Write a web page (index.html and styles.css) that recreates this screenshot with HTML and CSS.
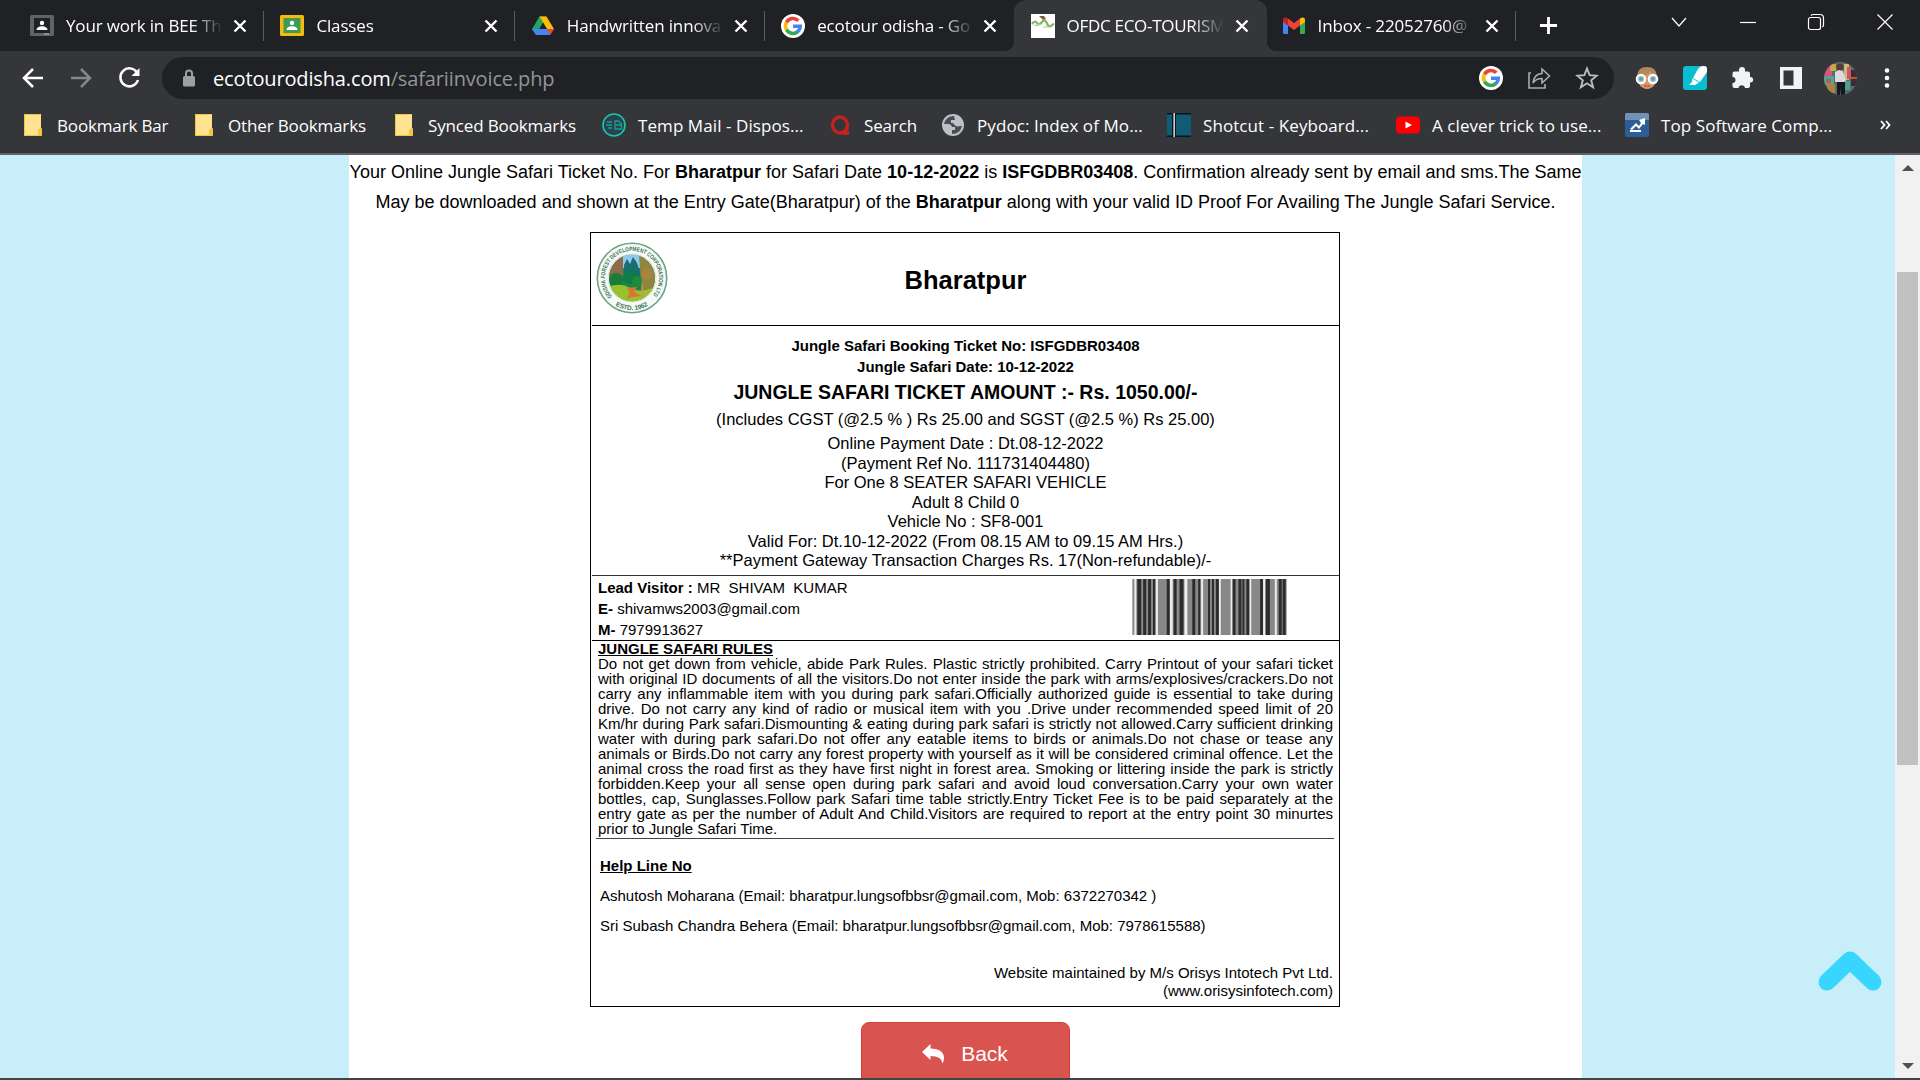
FILE: index.html
```html
<!DOCTYPE html>
<html lang="en">
<head>
<meta charset="utf-8">
<title>OFDC ECO-TOURISM</title>
<link rel="stylesheet" href="styles.css">
</head>
<body>
<svg width="0" height="0" class="defs">
  <symbol id="x" viewBox="0 0 14 14"><path d="M1.500 1.500l11 11M12.500 1.500l-11 11" stroke="#fff" stroke-width="2.400" fill="none"/></symbol>
  <symbol id="google" viewBox="0 0 24 24"><circle cx="12" cy="12" r="12" fill="#fff"/><g fill="none" stroke-width="3.600"><path d="M5.500 8.300A7.400 7.400 0 0 1 17.300 6.800" stroke="#ea4335"/><path d="M5.500 15.700A7.400 7.400 0 0 1 5.500 8.300" stroke="#fbbc05"/><path d="M17 17.400A7.400 7.400 0 0 1 5.500 15.700" stroke="#34a853"/><path d="M12 12.200H19.200A7.400 7.400 0 0 1 16.500 17.700" stroke="#4285f4"/></g></symbol>
  <symbol id="folder" viewBox="0 0 18 22"><path d="M0 0h17v14l1 1v6l-1 1H0z" fill="#ffe08a"/><path d="M0 21h14v-5l1-1.500h3V21l-1 1H0z" fill="#f5c542"/><path d="M0 0h16v1H1v20H0z" fill="#eec54b"/><path d="M1 1h15v13l-2 1.500V20H1z" fill="#ffe391"/></symbol>
</svg>
<div class="screen">
  <header class="tabs">
    <div class="tab"><svg class="fav" viewBox="0 0 24 24"><rect y="1" width="24" height="21" rx="1.500" fill="#5f6368"/><rect x="4" y="4" width="16" height="15" fill="#202124"/><circle cx="12" cy="9" r="2.200" fill="#fff"/><path d="M6.500 16c0-5 11-5 11 0z" fill="#fff"/><path d="M14 19h5v2h-5z" fill="#8b8f94"/></svg><span class="title">Your work in BEE Th</span><svg class="x"><use href="#x"/></svg></div>
    <div class="tab"><svg class="fav" viewBox="0 0 24 24"><rect y="1" width="24" height="21" rx="1.500" fill="#f6b90e"/><rect x="3.500" y="4" width="17" height="15" fill="#3f9a56"/><circle cx="12" cy="9" r="2.200" fill="#fff"/><path d="M6.500 16c0-5 11-5 11 0z" fill="#fff"/></svg><span class="title">Classes</span><svg class="x"><use href="#x"/></svg></div>
    <div class="tab"><svg class="fav" viewBox="0 0 24 24"><path d="M8.500 2.500h7L12 9 5 20.500 1 15z" fill="#1fa463"/><path d="M8.500 2.500h7L23 15h-7z" fill="#fbbc04"/><path d="M7.500 15H23l-4 6H5l-4-6z" fill="#4285f4"/><path d="M16 15h7l-4 6z" fill="#ea4335"/><path d="M12 9l3.500 6h-7z" fill="#202124"/></svg><span class="title">Handwritten innova</span><svg class="x"><use href="#x"/></svg></div>
    <div class="tab last"><svg class="fav"><use href="#google"/></svg><span class="title">ecotour odisha - Go</span><svg class="x"><use href="#x"/></svg></div>
    <div class="tab active"><svg class="fav" viewBox="0 0 24 24"><path d="M0 0h24v24H0z" fill="#fff"/><path d="M8 2h5l2 3-3 1z" fill="#7a5c45"/><path d="M1 10q3-4 5-1t5-1 5 1.500 7 0" fill="none" stroke="#86b75a" stroke-width="2.200"/><path d="M3 11q4 1 6-1M12 13h8" fill="none" stroke="#b7cba6" stroke-width="1.200"/></svg><span class="title">OFDC ECO-TOURISM</span><svg class="x"><use href="#x"/></svg></div>
    <div class="tab"><svg class="fav" viewBox="0 0 24 24"><path d="M1 6v12.500a1.500 1.500 0 0 0 1.500 1.500H6V11z" fill="#4285f4"/><path d="M23 6v12.500a1.500 1.500 0 0 1-1.500 1.500H18V11z" fill="#34a853"/><path d="M1 7V6c0-3 3-3 5-1.500v7L1 8z" fill="#c5221f"/><path d="M6 4.500l6 4.500 6-4.500v7L12 16l-6-4.500z" fill="#ea4335"/><path d="M18 4.500c2-1.500 5-1.500 5 1.500v2l-5 3.500z" fill="#fbbc04"/></svg><span class="title">Inbox - 22052760@</span><svg class="x"><use href="#x"/></svg></div>
    <svg class="plus" viewBox="0 0 20 20"><path d="M10 1v18M1 10h18" stroke="#fff" stroke-width="3"/></svg>
    <div class="win">
      <svg viewBox="0 0 18 18"><path d="M2 5l7 8 7-8"/></svg>
      <svg viewBox="0 0 18 18"><path d="M1 9.500h16"/></svg>
      <svg viewBox="0 0 18 18"><rect x="1.500" y="4.500" width="12" height="12" rx="2"/><path d="M4 2.500q1-1 2-1h7q3.500 0 3.500 3.500v7q0 1-1 2"/></svg>
      <svg viewBox="0 0 18 18"><path d="M1.500 1.500l15 15M16.500 1.500l-15 15"/></svg>
    </div>
  </header>
  <div class="toolbar">
    <svg class="nav" viewBox="0 0 24 24"><path d="M22 12H4M12 3l-9 9 9 9" stroke="#fff"/></svg>
    <svg class="nav" viewBox="0 0 24 24"><path d="M2 12h18M12 3l9 9-9 9" stroke="#85878a"/></svg>
    <svg class="nav" viewBox="0 0 24 24"><path d="M20 6.500A9 9 0 1 0 21 14" stroke="#fff"/><path d="M22.500 2v8h-8z" fill="#fff"/></svg>
    <div class="omnibox">
      <svg class="lock" viewBox="0 0 14 18"><rect x="1" y="7" width="12" height="10.500" rx="1.500" fill="#9aa0a6"/><path d="M4 8V4.500a3 3 0 0 1 6 0V8" fill="none" stroke="#9aa0a6" stroke-width="2"/></svg>
      <span class="url">ecotourodisha.com<i>/safariinvoice.php</i></span>
      <svg class="i24"><use href="#google"/></svg>
      <svg class="i24" viewBox="0 0 24 24"><path d="M4 7H2v15h16v-4M6 17q1-9 9-9.500V3l7.500 7-7.500 7v-4.500q-6 0-9 4.500z" fill="none" stroke="#a9acb0" stroke-width="1.600"/></svg>
      <svg class="i24" viewBox="0 0 24 24"><path d="M12 2.500l2.600 6.700 7.200.5-5.600 4.600 1.900 7-6.100-4-6.100 4 1.900-7L2.200 9.700l7.200-.5z" fill="none" stroke="#b9bcc0" stroke-width="1.900"/></svg>
    </div>
    <svg class="i24" viewBox="0 0 24 24"><path d="M2 12C2 4 6 1 12 1s10 3 10 11l-3 8q-7 6-14 0z" fill="#b08a58"/><path d="M5 10q9-1 10-5l4 6v8q-7 8-14 0z" fill="#d99467"/><g fill="#aacdd8" stroke="#fff" stroke-width="2"><circle cx="6" cy="13" r="4.300"/><circle cx="18" cy="13" r="4.300"/></g><circle cx="6" cy="13" r="2" fill="#6f97a5"/><circle cx="18" cy="13" r="2" fill="#6f97a5"/><path d="M9 20h6" stroke="#a54a43"/></svg>
    <svg class="i24" viewBox="0 0 24 24"><rect width="24" height="24" rx="3" fill="#08bfd1"/><path d="M15 3q2-3 5-3h1q3 0 3 3v3l-7 10-7-4z" fill="#fff"/><path d="M9.500 12.500l6.500 4-4 2.500H6l3-3z" fill="#fff"/></svg>
    <svg class="i24" viewBox="0 0 24 24"><path d="M1.500 7.500q0-2 2-2H8V4a3 3 0 0 1 6 0v1.500h3q2 0 2 2V11h1a2.800 2.800 0 0 1 0 5.500h-1V20q0 2-2 2h-3a3.300 3.300 0 0 0-6.500 0H3.500q-2 0-2-2v-3a3 3 0 0 0 0-6z" fill="#f1f3f4"/></svg>
    <svg class="i24" viewBox="0 0 24 24"><path d="M1 1h22v22H1z" fill="#f1f3f4"/><path d="M4.500 4.500h10v15h-10z" fill="#35363a"/></svg>
    <svg class="avatar" viewBox="0 0 33 33"><defs><clipPath id="av"><circle cx="16.500" cy="16.500" r="16.500"/></clipPath></defs><g clip-path="url(#av)"><path d="M0 0h33v33H0z" fill="#536f69"/><path d="M0 4h8v10H0z" fill="#d5567c"/><path d="M6 2h6v7H6z" fill="#c9a44a"/><path d="M0 14h10v9H0z" fill="#4ba89b"/><path d="M2 17h5v4H2z" fill="#c9544a"/><path d="M20 2h5v16h-5z" fill="#d1b878"/><path d="M23 5h4v12h-4z" fill="#cc5569"/><path d="M27 8h6v16h-6z" fill="#3d2c34"/><path d="M27 15h6v2h-6z" fill="#c0552f"/><path d="M3 22h8v9H3z" fill="#a9833f"/><path d="M21 19h5v9h-5z" fill="#4f9f8f"/><circle cx="16" cy="5" r="3.500" fill="#583a35"/><path d="M11 10l4-2 4 1 3 10-2 1H11z" fill="#ded9df"/><path d="M13 20h8v13h-4l-1-7v7h-3z" fill="#171720"/></g></svg>
    <svg class="dots" viewBox="0 0 6 24"><circle cx="3" cy="4.500" r="2.300"/><circle cx="3" cy="12" r="2.300"/><circle cx="3" cy="19.500" r="2.300"/></svg>
  </div>
  <nav class="bookmarks">
    <a><svg class="fold"><use href="#folder"/></svg>Bookmark Bar</a>
    <a><svg class="fold"><use href="#folder"/></svg>Other Bookmarks</a>
    <a><svg class="fold"><use href="#folder"/></svg>Synced Bookmarks</a>
    <a class="wide"><svg class="i24" viewBox="0 0 24 24"><circle cx="12" cy="12" r="11" fill="#2b4054" stroke="#18c8a0" stroke-width="1.600"/><path d="M5 9h5M4 12h6M6 15h4M13 8h3.500l3 3v5H13zM13 12h6" fill="none" stroke="#189f8a" stroke-width="1.300"/></svg>Temp Mail - Dispos...</a>
    <a><svg class="i24" viewBox="0 0 24 24"><ellipse cx="12" cy="12" rx="7.500" ry="8" fill="none" stroke="#c5221f" stroke-width="3.500"/><path d="M13 18h8v4h-5z" fill="#c5221f"/></svg>Search</a>
    <a class="wide"><svg class="i24" viewBox="0 0 24 24"><circle cx="12" cy="12" r="11" fill="#bdc1c6"/><path d="M13 3q-8 0-10 8h4q3 0 4 3h3v3h-3v4q8 0 10-8h-3q-1 1-3 0t-3-3h-2V7h4z" fill="#4a4d51"/></svg>Pydoc: Index of Mo...</a>
    <a class="wide"><svg class="i24" viewBox="0 0 24 24"><path d="M0 0h24v24H0z" fill="#0b1418"/><path d="M0 1.500h5v21H0zM9 1.500h15v21H9z" fill="#125b75"/><path d="M6.500 0h1.300v24H6.500z" fill="#fff"/></svg>Shotcut - Keyboard...</a>
    <a class="wide"><svg class="i24" viewBox="0 0 24 24"><rect y="3.500" width="24" height="17" rx="4" fill="#f00"/><path d="M9.500 8.500l6.500 3.500-6.500 3.500z" fill="#fff"/></svg>A clever trick to use...</a>
    <a class="wide"><svg class="i24" viewBox="0 0 24 24"><rect width="24" height="24" rx="2" fill="#2d5d96"/><path d="M0 2q0-2 2-2h20q2 0 2 2v5H0z" fill="#7192b5"/><path d="M5 16l6-6 3 3 2-3-2-3 6-2v7l-2-1-4 5-3-3-4 4zM5 17h11v2H5z" fill="#fff"/></svg>Top Software Comp...</a>
    <svg class="more" viewBox="0 0 12 12"><path d="M1 2L4.500 6 1 10M6 2l3.500 4L6 10" fill="none" stroke="#fff" stroke-width="1.800"/></svg>
  </nav>
  <main class="page">
    <div class="content">
      <p class="intro">Your Online Jungle Safari Ticket No. For <b>Bharatpur</b> for Safari Date <b>10-12-2022</b> is <b>ISFGDBR03408</b>. Confirmation already sent by email and sms.The Same<br>May be downloaded and shown at the Entry Gate(Bharatpur) of the <b>Bharatpur</b> along with your valid ID Proof For Availing The Jungle Safari Service.</p>
      <section class="ticket">
        <div class="head">
          <svg class="seal" viewBox="0 0 72 72">
            <defs><path id="ring" d="M16.300 54.400A27 27 0 1 1 55.700 54.400"/><path id="ring2" d="M15.400 60.500A32 32 0 0 0 56.600 60.500"/><clipPath id="c"><ellipse cx="36" cy="36" rx="23" ry="23.500"/></clipPath></defs>
            <circle cx="36" cy="36" r="34.700" fill="#f6faf7" stroke="#6ba384" stroke-width="1.600"/>
            <g clip-path="url(#c)"><path d="M0 0h72v72H0z" fill="#238345"/><path d="M24 12h22v14H24z" fill="#8fc9ee"/><path d="M13 18l14-4v20H13z" fill="#8c6a4c"/><path d="M43 14l16 4v31H46z" fill="#91843c"/><path d="M28 23l3-6 3 5 3-7 4 6 3 9v6H28z" fill="#1a6e70"/><circle cx="20" cy="38" r="7" fill="#197c3c"/><circle cx="34" cy="35" r="7" fill="#0e7c46"/><circle cx="41" cy="39" r="5" fill="#1d8a3c"/><circle cx="51" cy="32" r="6" fill="#a58540"/><path d="M12 45q12-5 22 1t27-2v22H12z" fill="#9bc02e"/><path d="M31 46l10-1-3 5 8 4-8 1-7 1 3-5z" fill="#d77736"/><path d="M46 38l2 17h-3z" fill="#c0a050"/></g>
            <circle cx="36" cy="36" r="24" fill="none" stroke="#cfe2d6" stroke-width=".8"/>
            <text class="arc"><textPath href="#ring" textLength="123" lengthAdjust="spacingAndGlyphs">ODISHA FOREST DEVELOPMENT CORPORATION LTD</textPath></text>
            <text class="arc big"><textPath href="#ring2" startOffset="5" textLength="34">ESTD. 1962</textPath></text>
          </svg>
          <h1>Bharatpur</h1>
        </div>
        <div class="info">
          <b class="sm">Jungle Safari Booking Ticket No: ISFGDBR03408</b>
          <b class="sm">Jungle Safari Date: 10-12-2022</b>
          <b class="amount">JUNGLE SAFARI TICKET AMOUNT :- Rs. 1050.00/-</b>
          <span class="tax">(Includes CGST (@2.5 % ) Rs 25.00 and SGST (@2.5 %) Rs 25.00)</span>
          <span>Online Payment Date : Dt.08-12-2022</span>
          <span>(Payment Ref No. 111731404480)</span>
          <span>For One 8 SEATER SAFARI VEHICLE</span>
          <span>Adult 8 Child 0</span>
          <span>Vehicle No : SF8-001</span>
          <span>Valid For: Dt.10-12-2022 (From 08.15 AM to 09.15 AM Hrs.)</span>
          <span>**Payment Gateway Transaction Charges Rs. 17(Non-refundable)/-</span>
        </div>
        <div class="lead">
          <div><b>Lead Visitor :</b> MR&nbsp; SHIVAM&nbsp; KUMAR<br><b>E-</b> shivamws2003@gmail.com<br><b>M-</b> 7979913627</div>
          <svg class="barcode" viewBox="0 0 157 57"><path d="M0 0h157v57H0z" fill="#ededed"/><g fill="#888"><path d="M0 0h2v57H0zM4 0h20v57H4zM26 0h12v57H26zM41 0h12v57H41zM56 0h14v57H56zM72 0h16v57H72zM90 0h10v57H90zM102 0h17v57h-17zM121 0h12v57h-12zM135 0h10v57h-10zM147 0h10v57h-10z"/></g><g fill="#2c2c2c"><path d="M5 0h4v57H5zM11 0h3v57h-3zM16 0h3v57h-3zM21 0h2v57h-2zM35 0h3v57h-3zM42 0h3v57h-3zM48 0h4v57h-4zM61 0h3v57h-3zM67 0h2v57h-2zM77 0h2v57h-2zM81 0h2v57h-2zM85 0h3v57h-3zM102 0h3v57h-3zM108 0h3v57h-3zM112 0h2v57h-2zM116 0h3v57h-3zM130 0h3v57h-3zM136 0h4v57h-4zM149 0h3v57h-3zM153 0h3v57h-3z"/></g></svg>
        </div>
        <div class="rules">
          <h2>JUNGLE SAFARI RULES</h2>
          <p>Do not get down from vehicle, abide Park Rules. Plastic strictly prohibited. Carry Printout of your safari ticket<br>with original ID documents of all the visitors.Do not enter inside the park with arms/explosives/crackers.Do not<br>carry any inflammable item with you during park safari.Officially authorized guide is essential to take during<br>drive. Do not carry any kind of radio or musical item with you .Drive under recommended speed limit of 20<br>Km/hr during Park safari.Dismounting &amp; eating during park safari is strictly not allowed.Carry sufficient drinking<br>water with during park safari.Do not offer any eatable items to birds or animals.Do not chase or tease any<br>animals or Birds.Do not carry any forest property with yourself as it will be considered criminal offence. Let the<br>animal cross the road first as they have first night in forest area. Smoking or littering inside the park is strictly<br>forbidden.Keep your all sense open during park safari and avoid loud conversation.Carry your own water<br>bottles, cap, Sunglasses.Follow park Safari time table strictly.Entry Ticket Fee is to be paid separately at the<br>entry gate as per the number of Adult And Child.Visitors are required to report at the entry point 30 minurtes</p>
          <p class="end">prior to Jungle Safari Time.</p>
        </div>
        <div class="help">
          <h2>Help Line No</h2>
          <p>Ashutosh Moharana (Email: bharatpur.lungsofbbsr@gmail.com, Mob: 6372270342 )</p>
          <p>Sri Subash Chandra Behera (Email: bharatpur.lungsofbbsr@gmail.com, Mob: 7978615588)</p>
        </div>
        <div class="credit">Website maintained by M/s Orisys Intotech Pvt Ltd.<br>(www.orisysinfotech.com)</div>
      </section>
      <div class="back"><svg viewBox="0 0 22 20"><path d="M0 8L8.500 0v4.500C17 4.500 22 8 22 14q0 3-1.500 5.500Q20 12 8.500 12v4z" fill="#fff"/></svg>Back</div>
    </div>
    <div class="side"><svg viewBox="0 0 64 40"><path d="M9 31L32 9l23 22" fill="none" stroke="#38d6ff" stroke-width="17" stroke-linecap="round" stroke-linejoin="round"/></svg></div>
    <div class="scroll"><i class="up"></i><div class="thumb"></div><i class="down"></i></div>
  </main>
</div>
</body>
</html>
```

FILE: styles.css
```css
* { box-sizing: border-box; }
body { margin: 0; background: #35363a; }
h1, h2, p { margin: 0; }
svg { display: block; flex: none; }
.defs { position: absolute; }
.screen { width: 1920px; height: 1080px; display: flex; flex-direction: column; overflow: hidden; border-bottom: 2px solid #424346; color: #fff; font: 17px "Open Sans", "Noto Sans", sans-serif; }
.tabs { height: 51px; flex: none; display: flex; align-items: center; background: #202124; padding-left: 14px; }
.tab { width: 250.400px; height: 51px; flex: none; display: flex; align-items: center; padding-left: 16px; position: relative; }
.tab::after { content: ""; width: 1px; height: 30px; background: #5b5d61; margin-left: 16px; }
.tab.last::after, .tab.active::after { visibility: hidden; }
.tab.last { width: 248.400px; }
.tab.active { background: #35363a; border-radius: 12px 12px 0 0; width: 253px; margin-right: -1px; padding-left: 17px; }
.tab.active::before { content: ""; position: absolute; left: -10px; right: -10px; bottom: 0; height: 10px; background: radial-gradient(circle at 0 0, transparent 10px, #35363a 10.500px) left / 10px 10px no-repeat, radial-gradient(circle at 100% 0, transparent 10px, #35363a 10.500px) right / 10px 10px no-repeat; }
.fav { width: 24px; height: 24px; }
.title { width: 156px; margin-left: 12px; margin-right: 12px; letter-spacing: -.15px; white-space: nowrap; overflow: hidden; -webkit-mask-image: linear-gradient(90deg, #000 125px, transparent 157px); mask-image: linear-gradient(90deg, #000 125px, transparent 157px); }
.active .title { letter-spacing: -.3px; }
.x { width: 14px; height: 14px; }
.plus { width: 19px; height: 19px; margin-left: 23px; }
.win { display: flex; gap: 50.700px; margin: -8px 0 0 112px; }
.win svg { width: 18px; height: 18px; fill: none; stroke: #fff; stroke-width: 1.200; }
.toolbar { height: 54px; flex: none; display: flex; align-items: center; padding-left: 21px; gap: 24px; }
.nav { width: 24px; height: 24px; fill: none; stroke-width: 2.500; }
.omnibox { width: 1452px; height: 42px; margin: 0 -3px 0 -3px; border-radius: 21px; background: #202124; display: flex; align-items: center; padding: 0 15px 0 20px; gap: 24px; }
.lock { width: 14px; height: 18px; }
.url { flex: 1; margin-left: -7px; font-size: 20px; letter-spacing: -.14px; }
.url i { font-style: normal; color: #929599; }
.i24 { width: 24px; height: 24px; }
.avatar { width: 33px; height: 33px; margin-left: -3px; }
.dots { width: 6px; height: 24px; fill: #fff; margin-left: 3px; }
.bookmarks { height: 50px; flex: none; border-bottom: 2px solid #5f6165; display: grid; grid-template-columns: 171px 200px 207px 226px 113px 226px 229px 229px 251px 20px; padding: 0 0 8px 24px; align-items: center; }
.bookmarks a { display: flex; align-items: center; gap: 12px; white-space: nowrap; letter-spacing: -.15px; }
.bookmarks .wide { letter-spacing: .08px; }
.fold { width: 18px; height: 22px; margin-right: 3px; }
.more { width: 12px; height: 12px; margin-left: 4px; }
.page { flex: 1; min-height: 0; display: grid; grid-template-columns: 1233px 313px 25px; padding-left: 349px; background: #c8eefa; color: #000; font: 16.500px "Liberation Sans", Arial, sans-serif; }
.content { background: #fff; display: flex; flex-direction: column; align-items: center; min-height: 0; overflow: hidden; }
.intro { font-size: 18px; line-height: 30px; text-align: center; white-space: nowrap; padding-top: 2px; height: 77px; flex: none; }
.ticket { width: 750px; height: 775px; flex: none; margin-left: -1px; border: 1px solid #000; padding-left: 1px; display: flex; flex-direction: column; }
.head { height: 93px; flex: none; border-bottom: 1px solid #000; display: flex; align-items: center; padding-left: 4px; }
.seal { width: 72px; height: 72px; margin-top: -2px; }
.arc { font: bold 6px "Liberation Sans", sans-serif; fill: #3e7557; }
.big { font-size: 6.500px; }
h1 { font-size: 25.500px; flex: 1; text-align: center; padding: 2px 76px 0 0; }
.info { height: 250px; flex: none; border-bottom: 1px solid #333; display: flex; flex-direction: column; align-items: center; padding-top: 9px; line-height: 19.500px; white-space: nowrap; }
.sm { font-size: 15px; line-height: 21px; }
.amount { font-size: 19.500px; line-height: 30px; }
.tax { line-height: 24px; margin-bottom: 3px; }
.lead { height: 65px; flex: none; border-bottom: 1px solid #000; display: flex; justify-content: space-between; padding: 1px 51px 0 6px; font-size: 15px; line-height: 21px; }
.barcode { width: 157px; height: 56px; margin-top: 2px; filter: blur(.5px); }
h2 { font-size: 15px; text-decoration: underline; }
.rules { height: 198px; flex: none; margin: 0 5px 0 4px; padding: 0 1px 0 2px; border-bottom: 1px solid #444; font-size: 15px; line-height: 15px; }
.rules h2 { line-height: 15px; }
.rules p { white-space: nowrap; text-align: justify; text-align-last: justify; }
.rules .end { text-align-last: left; }
.help { padding: 12px 0 0 8px; font-size: 15px; line-height: 30px; height: 125px; flex: none; }
.credit { font-size: 15px; line-height: 18px; text-align: right; padding-right: 6px; }
.back { width: 209px; height: 64px; flex: none; margin: 15px 0 0 -1px; background: #d9534f; border: 1px solid #d43f3a; border-radius: 8px; color: #fff; font-size: 21px; display: flex; justify-content: center; align-items: center; gap: 17px; }
.back svg { width: 22px; height: 20px; }
.side { display: flex; align-items: flex-end; justify-content: flex-end; padding: 0 13px 87px 0; }
.side svg { width: 64px; height: 40px; }
.scroll { background: #f1f1f1; display: flex; flex-direction: column; align-items: center; }
.up, .down { border: 6px solid transparent; }
.up { border-top: 0; border-bottom-color: #505050; margin-top: 10px; }
.thumb { width: 21px; height: 493px; background: #c1c1c1; margin-top: 101px; }
.down { border-bottom: 0; border-top-color: #505050; margin-top: auto; margin-bottom: 9px; }
```
